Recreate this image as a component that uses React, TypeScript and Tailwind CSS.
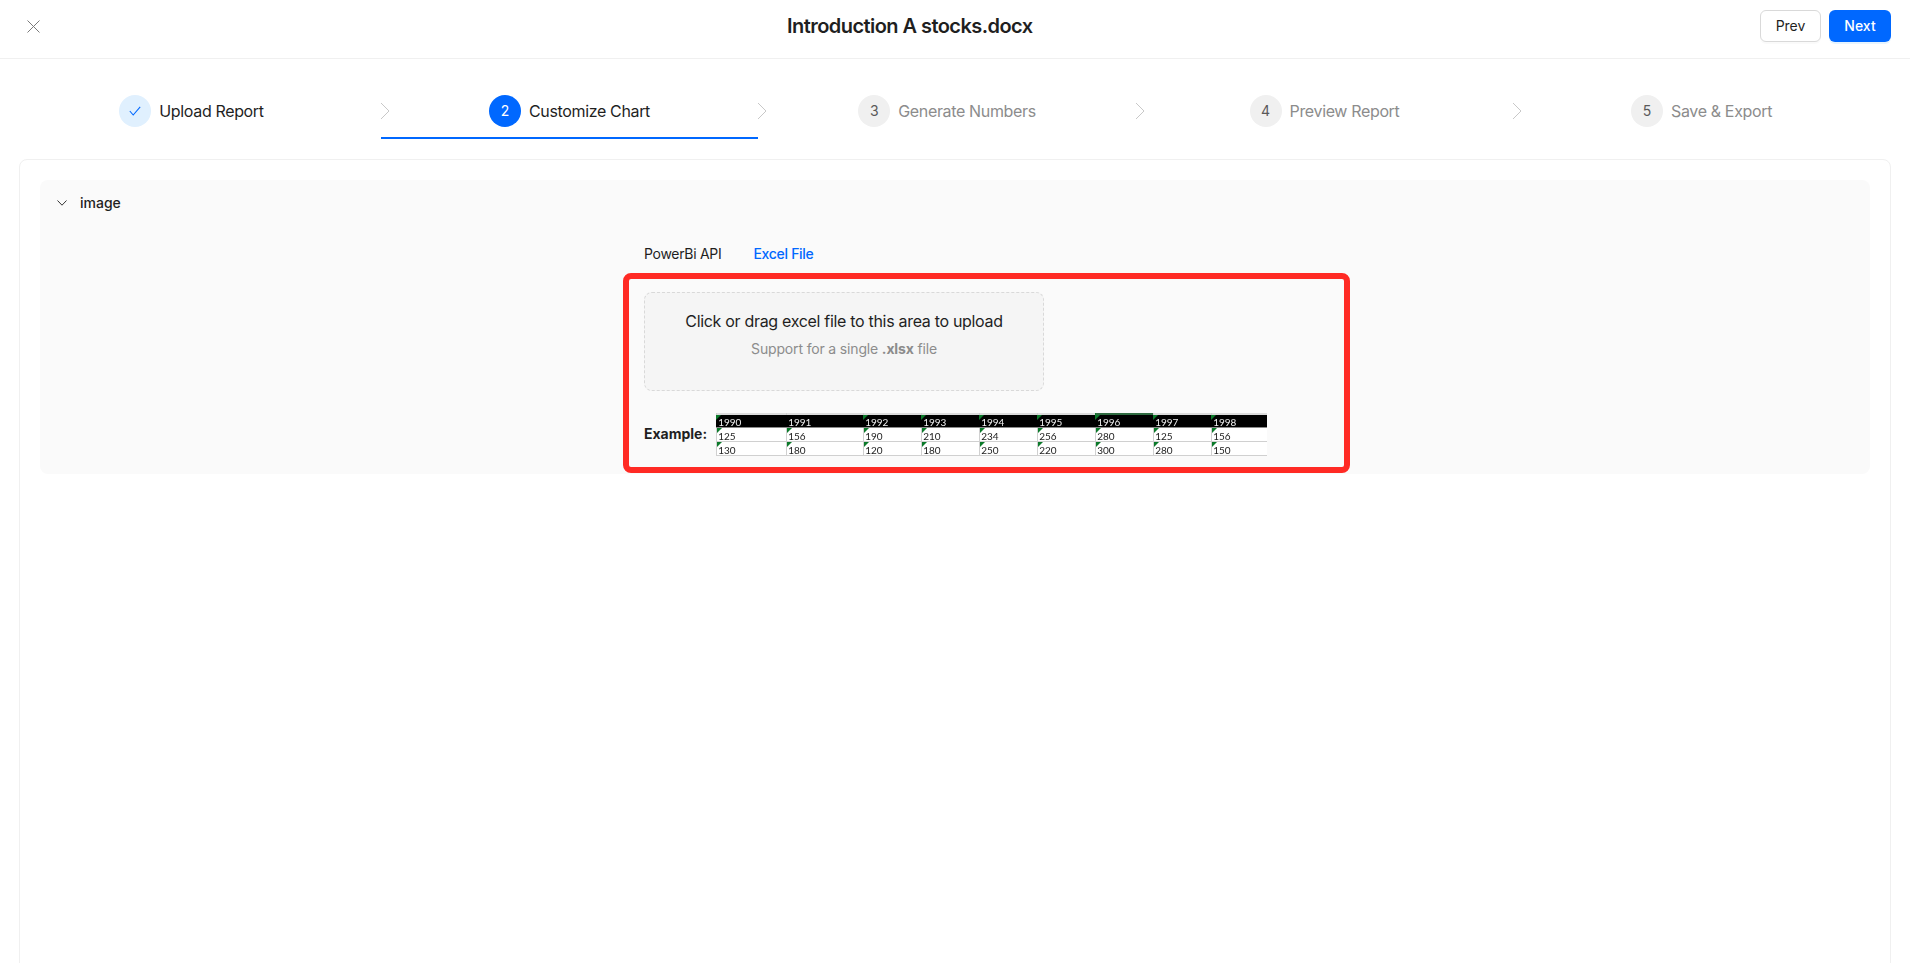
const font = { fontFamily: 'Inter, "Liberation Sans", sans-serif' };

function Chevron() {
  return (
    <svg width="10" height="18" viewBox="0 0 10 18" fill="none" className="absolute right-[-9px] top-[7px]">
      <path d="M1 1L9 9L1 17" stroke="#c8c8c8" strokeWidth="1" />
    </svg>
  );
}

const steps = [
  { n: '1', label: 'Upload Report', state: 'done' },
  { n: '2', label: 'Customize Chart', state: 'active' },
  { n: '3', label: 'Generate Numbers', state: 'todo' },
  { n: '4', label: 'Preview Report', state: 'todo' },
  { n: '5', label: 'Save & Export', state: 'todo' },
];

function Step({ n, label, state, last }: { n: string; label: string; state: string; last: boolean }) {
  return (
    <div className="relative flex h-[44px] items-start justify-center">
      <div className="flex items-center gap-2">
        {state === 'done' && (
          <span className="flex h-8 w-8 items-center justify-center rounded-full bg-[#e0f0fe]">
            <svg width="12" height="10" viewBox="0 0 12 10" fill="none">
              <path d="M0.8 5L4.2 9L11.2 0.8" stroke="#0068ff" strokeWidth="1.1" />
            </svg>
          </span>
        )}
        {state === 'active' && (
          <span className="flex h-8 w-8 items-center justify-center rounded-full bg-[#0068ff] text-sm text-white">{n}</span>
        )}
        {state === 'todo' && (
          <span className="flex h-8 w-8 items-center justify-center rounded-full bg-[#f0f0f0] text-sm text-[#595959]">{n}</span>
        )}
        <span className={state === 'todo' ? 'text-base tracking-[-0.35px] text-[#8c8c8c]' : 'text-base tracking-[-0.35px] text-[#1f1f1f]'}>{label}</span>
      </div>
      {state === 'active' && <div className="absolute inset-x-0 bottom-0 h-[2px] bg-[#0068ff]" />}
      {!last && <Chevron />}
    </div>
  );
}

const tableCols = 'grid grid-cols-[70px_77px_58px_58px_58px_58px_58px_58px_56px]';
const rows = [
  ['1990', '1991', '1992', '1993', '1994', '1995', '1996', '1997', '1998'],
  ['125', '156', '190', '210', '234', '256', '280', '125', '156'],
  ['130', '180', '120', '180', '250', '220', '300', '280', '150'],
];

function Flag() {
  return (
    <svg width="5" height="5" viewBox="0 0 5 5" className="absolute left-0 top-0">
      <path d="M0 0H5L0 5Z" fill="#0b7a2a" />
    </svg>
  );
}

function ExampleTable() {
  return (
    <div className="w-[550px] text-[10px] leading-[14px] blur-[0.3px]" style={{ fontFamily: 'Lato, "Open Sans", sans-serif' }}>
      <div className={tableCols}>
        {rows[0].map((_, c) => (
          <div
            key={c}
            className={
              c === 6
                ? 'h-[2px] border-l border-[#0b7a2a] bg-[#2f6b41]'
                : 'h-[2px] border-l border-[#cfcfcf] bg-[#dcdcdc]'
            }
          />
        ))}
      </div>
      {rows.map((row, r) => (
        <div key={r} className={tableCols}>
          {row.map((cell, c) => (
            <div
              key={c}
              className={
                r === 0
                  ? 'relative h-[13px] overflow-hidden border-b border-[#8a8a8a] bg-black pl-[2px] text-[#f0f0f0]'
                  : 'relative h-[14px] overflow-hidden border-b border-l border-[#d0d0d0] bg-white pl-[1px] pt-px text-[#222222]'
              }
            >
              {!(r === 0 && c === 1) && <Flag />}
              <span className="relative block">{cell}</span>
            </div>
          ))}
        </div>
      ))}
    </div>
  );
}

export default function App() {
  return (
    <div className="h-[963px] overflow-hidden bg-white text-[#1f1f1f]" style={font}>
      <header className="flex h-[59px] items-start border-b border-[#f0f0f0] pl-[27px] pr-[19px] pt-[10px]">
        <div className="w-[760px] pt-[10px]">
          <svg width="13" height="13" viewBox="0 0 13 13" fill="none">
            <path d="M0.5 0.5L12.5 12.5M12.5 0.5L0.5 12.5" stroke="#7a7a7a" strokeWidth="1" />
          </svg>
        </div>
        <h1 className="text-xl font-semibold leading-8 tracking-[-0.55px]">Introduction A stocks.docx</h1>
        <div className="ml-auto flex gap-2">
          <button className="h-8 w-[61px] rounded-md border border-[#d9d9d9] bg-white text-sm shadow-[0_2px_0_rgba(0,0,0,0.02)]">Prev</button>
          <button className="h-8 w-[62px] rounded-md bg-[#0068ff] text-sm font-medium text-white shadow-[0_2px_0_rgba(5,145,255,0.1)]">Next</button>
        </div>
      </header>

      <nav className="ml-[2px] mt-[36px] grid w-[1888px] grid-cols-[379px_377px_378px_377px_377px]">
        {steps.map((s, i) => (
          <Step key={s.n} n={s.n} label={s.label} state={s.state} last={i === steps.length - 1} />
        ))}
      </nav>

      <section className="ml-[19px] mt-[20px] h-[900px] w-[1872px] rounded-lg border border-[#f0f0f0] p-5">
        <div className="h-[294px] rounded-lg bg-[#fafafa]">
          <div className="flex h-[46px] items-center gap-[13px] pl-[17px]">
            <svg width="10" height="6" viewBox="0 0 10 6" fill="none">
              <path d="M0.5 0.5L5 5.2L9.5 0.5" stroke="#333333" strokeWidth="1" />
            </svg>
            <span className="text-sm font-medium">image</span>
          </div>

          <div className="ml-[583px] w-[727px]">
            <div className="flex h-[47px] items-center gap-[32px] pl-[21px] pt-[9px] text-sm tracking-[-0.3px]">
              <span>PowerBi API</span>
              <span className="font-medium text-[#0068ff]">Excel File</span>
            </div>

            <div className="rounded-lg border-[6px] border-[#ff2a24] pb-[11px] pl-[15px] pt-[13px]">
              <div className="h-[99px] w-[400px] rounded-lg border border-dashed border-[#d9d9d9] bg-[#f5f5f5] pt-[16px] text-center">
                <p className="text-base leading-6 tracking-[-0.31px]">Click or drag excel file to this area to upload</p>
                <p className="mt-[5px] text-sm leading-[22px] tracking-[-0.16px] text-[#8c8c8c]">
                  Support for a single <b className="font-bold">.xlsx</b> file
                </p>
              </div>
              <div className="mt-[22px] flex items-center gap-[9px]">
                <span className="pb-[2px] text-sm font-bold leading-none">Example:</span>
                <ExampleTable />
              </div>
            </div>
          </div>
        </div>
      </section>
    </div>
  );
}
